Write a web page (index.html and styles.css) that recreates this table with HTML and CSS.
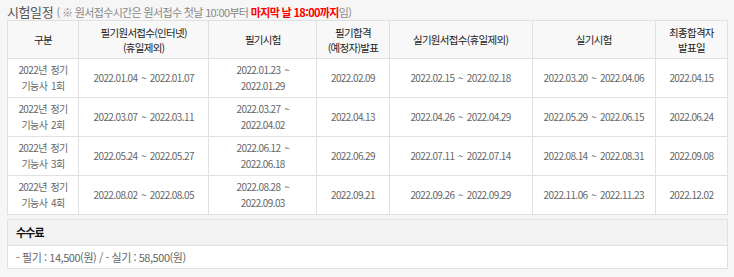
FILE: index.html
```html
<!DOCTYPE html>
<html lang="ko">
<head>
<meta charset="utf-8">
<link rel="stylesheet" href="styles.css">
</head>
<body>
<div class="wrap">
  <div class="title">시험일정 <span class="note">( ※ 원서접수시간은 원서접수 첫날 10:00부터 <b class="red">마지막 날 18:00까지</b>임)</span></div>
  <table class="sched">
    <colgroup>
      <col class="c1"><col class="c2"><col class="c3"><col class="c4"><col class="c5"><col class="c6"><col class="c7">
    </colgroup>
    <thead>
      <tr>
        <th>구분</th>
        <th>필기원서접수(인터넷)<br>(휴일제외)</th>
        <th>필기시험</th>
        <th>필기합격<br>(예정자)발표</th>
        <th>실기원서접수(휴일제외)</th>
        <th>실기시험</th>
        <th>최종합격자<br>발표일</th>
      </tr>
    </thead>
    <tbody>
      <tr>
        <td>2022년 정기<br>기능사 1회</td>
        <td>2022.01.04 ~ 2022.01.07</td>
        <td>2022.01.23 ~<br>2022.01.29</td>
        <td>2022.02.09</td>
        <td>2022.02.15 ~ 2022.02.18</td>
        <td>2022.03.20 ~ 2022.04.06</td>
        <td>2022.04.15</td>
      </tr>
      <tr>
        <td>2022년 정기<br>기능사 2회</td>
        <td>2022.03.07 ~ 2022.03.11</td>
        <td>2022.03.27 ~<br>2022.04.02</td>
        <td>2022.04.13</td>
        <td>2022.04.26 ~ 2022.04.29</td>
        <td>2022.05.29 ~ 2022.06.15</td>
        <td>2022.06.24</td>
      </tr>
      <tr>
        <td>2022년 정기<br>기능사 3회</td>
        <td>2022.05.24 ~ 2022.05.27</td>
        <td>2022.06.12 ~<br>2022.06.18</td>
        <td>2022.06.29</td>
        <td>2022.07.11 ~ 2022.07.14</td>
        <td>2022.08.14 ~ 2022.08.31</td>
        <td>2022.09.08</td>
      </tr>
      <tr>
        <td>2022년 정기<br>기능사 4회</td>
        <td>2022.08.02 ~ 2022.08.05</td>
        <td>2022.08.28 ~<br>2022.09.03</td>
        <td>2022.09.21</td>
        <td>2022.09.26 ~ 2022.09.29</td>
        <td>2022.11.06 ~ 2022.11.23</td>
        <td>2022.12.02</td>
      </tr>
    </tbody>
  </table>
  <div class="fee">
    <div class="fee-head">수수료</div>
    <div class="fee-body">- 필기 : 14,500(원) / - 실기 : 58,500(원)</div>
  </div>
</div>
</body>
</html>
```
FILE: styles.css
```css
html, body {
  margin: 0;
  padding: 0;
  background: #f6f6f6;
}
body {
  font-family: "Noto Sans CJK KR", "Noto Sans", sans-serif;
  font-size: 11px;
  color: #666;
}
.wrap {
  padding: 4px 7px 0 7px;
  width: 720px;
}
.title {
  font-size: 13px;
  line-height: 16px;
  color: #555;
  height: 16px;
  letter-spacing: -0.4px;
}
.note {
  font-size: 11px;
  color: #888;
  letter-spacing: -0.65px;
}
.red {
  color: #f00;
  font-weight: bold;
}
.sched {
  width: 721px;
  border-collapse: collapse;
  table-layout: fixed;
  background: #fff;
}
.c1 { width: 71px; }
.c2 { width: 130px; }
.c3 { width: 108px; }
.c4 { width: 72px; }
.c5 { width: 143px; }
.c6 { width: 123px; }
.c7 { width: 72px; }
.sched th, .sched td {
  border: 1px solid #e0e0e0;
  text-align: center;
  vertical-align: middle;
}
.sched th {
  background: #f8f8f8;
  color: #222;
  font-weight: normal;
  font-size: 10.5px;
  line-height: 15px;
  height: 37px;
  padding: 0;
  letter-spacing: -0.7px;
}
.sched td {
  font-size: 10px;
  line-height: 16px;
  height: 38px;
  padding: 0;
  color: #666;
  letter-spacing: -0.6px;
  word-spacing: 1.5px;
}
.fee {
  margin-top: 4px;
  border: 1px solid #e0e0e0;
  width: 719px;
  background: #fff;
}
.fee-head {
  background: #f3f3f3;
  border-bottom: 1px solid #e0e0e0;
  height: 25px;
  line-height: 25px;
  padding-left: 8px;
  font-weight: bold;
  color: #111;
  font-size: 11px;
  letter-spacing: -0.9px;
}
.fee-body {
  font-size: 11px;
  height: 22px;
  line-height: 22px;
  padding-left: 8px;
  color: #666;
  letter-spacing: -0.45px;
}
```
